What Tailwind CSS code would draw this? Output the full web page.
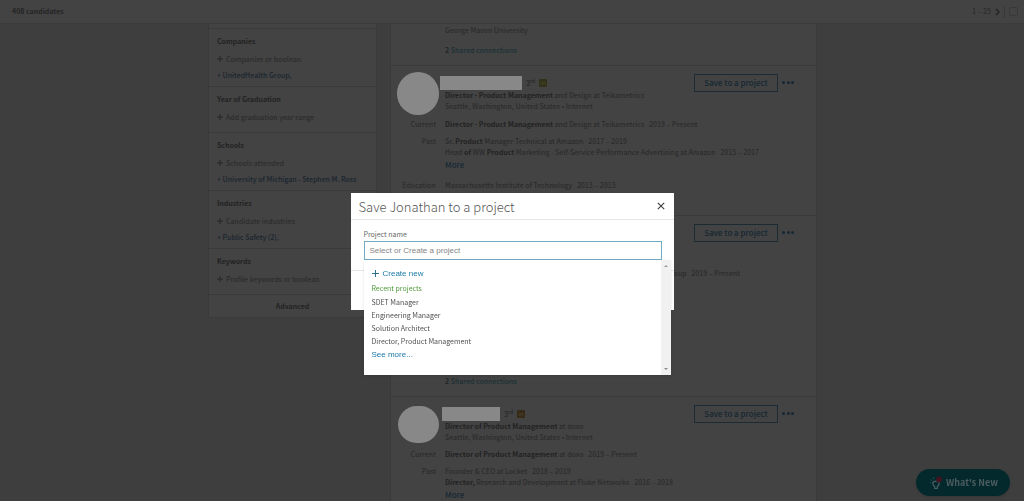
<!DOCTYPE html>
<html lang="en">
<head>
  <meta charset="UTF-8" />
  <meta name="viewport" content="width=device-width, initial-scale=1" />
  <title>Save to a project</title>
  <script src="https://cdn.jsdelivr.net/npm/@tailwindcss/browser@4"></script>
</head>
<body class="h-screen overflow-hidden bg-[#3e3e3e] font-['Noto_Sans_CJK_SC','Liberation_Sans',sans-serif] text-[7px] leading-[11px] font-medium text-[#2c2c2c]">

  <!-- Top bar -->
  <header class="flex h-6 items-center justify-between border-b border-[#3c3c3c] bg-[#434343] pl-3 pr-[6px]">
    <h1 class="font-bold text-[#232323]">408 candidates</h1>
    <div class="flex items-center gap-1">
      <span>1 – 25</span>
      <button aria-label="Next page">
        <svg class="h-2 w-[5px]" viewBox="0 0 5 8" fill="none" stroke="#222" stroke-width="1.4"><path d="M1 1l3 3-3 3" /></svg>
      </button>
      <span class="h-3 w-px bg-[#383838]"></span>
      <input type="checkbox" aria-label="Select all" class="h-[9px] w-[9px] appearance-none rounded-[2px] border border-[#393939]" />
    </div>
  </header>

  <div class="flex items-start">
    <!-- Filters -->
    <aside class="ml-[208px] w-[169px] shrink-0 border-x border-b border-[#3a3a3a] bg-[#434343] leading-4">
      <div class="h-[5px] border-b border-[#3a3a3a]"></div>
      <section class="border-b border-[#3a3a3a] px-2 pt-1 pb-[3px]">
        <h2 class="mb-[2px] font-bold text-[#222]">Companies</h2>
        <button class="flex items-center gap-[3px]">
          <svg class="h-[6px] w-[6px]" viewBox="0 0 6 6" stroke="#262626"><path d="M3 0v6M0 3h6" /></svg>Companies or boolean
        </button>
        <a href="#" class="block text-[#1a2530]">+ UnitedHealth Group,</a>
      </section>
      <section class="border-b border-[#3a3a3a] px-2 pt-1 pb-[7px]">
        <h2 class="mb-[2px] font-bold text-[#222]">Year of Graduation</h2>
        <button class="flex items-center gap-[3px]">
          <svg class="h-[6px] w-[6px]" viewBox="0 0 6 6" stroke="#262626"><path d="M3 0v6M0 3h6" /></svg>Add graduation year range
        </button>
      </section>
      <section class="border-b border-[#3a3a3a] px-2 pt-1 pb-[3px]">
        <h2 class="mb-[2px] font-bold text-[#222]">Schools</h2>
        <button class="flex items-center gap-[3px]">
          <svg class="h-[6px] w-[6px]" viewBox="0 0 6 6" stroke="#262626"><path d="M3 0v6M0 3h6" /></svg>Schools attended
        </button>
        <a href="#" class="block text-[#1a2530]">+ University of Michigan - Stephen M. Ross</a>
      </section>
      <section class="border-b border-[#3a3a3a] px-2 pt-1 pb-[3px]">
        <h2 class="mb-[2px] font-bold text-[#222]">Industries</h2>
        <button class="flex items-center gap-[3px]">
          <svg class="h-[6px] w-[6px]" viewBox="0 0 6 6" stroke="#262626"><path d="M3 0v6M0 3h6" /></svg>Candidate industries
        </button>
        <a href="#" class="block text-[#1a2530]">+ Public Safety (2),</a>
      </section>
      <section class="border-b border-[#3a3a3a] px-2 pt-1 pb-[7px]">
        <h2 class="mb-[2px] font-bold text-[#222]">Keywords</h2>
        <button class="flex items-center gap-[3px]">
          <svg class="h-[6px] w-[6px]" viewBox="0 0 6 6" stroke="#262626"><path d="M3 0v6M0 3h6" /></svg>Profile keywords or boolean
        </button>
      </section>
      <button class="h-[22px] w-full font-bold text-[#222]">Advanced</button>
    </aside>

    <!-- Results -->
    <main class="ml-[13px] w-[427px] shrink-0 border-x border-[#3a3a3a] bg-[#434343]">
      <article class="h-[41px] pl-[54px] pt-px">
        <p>George Mason University</p>
        <a href="#" class="mt-[9px] block text-[#1b3135]"><b class="text-[#1d262b]">2</b> Shared connections</a>
      </article>

      <article class="h-[150px] border-t border-[#3a3a3a]">
        <div class="flex pl-[6px] pr-[22px] pt-[6px]">
          <div class="h-[43px] w-[42px] shrink-0 rounded-full bg-[#888]"></div>
          <div class="ml-[1px] pt-[4px]">
            <div class="flex items-center gap-1">
              <span class="h-[14px] w-[82px] bg-[#888]"></span>
              <span class="text-[#262626]">3<sup class="text-[5px]">rd</sup></span>
              <svg class="h-2 w-2" viewBox="0 0 8 8"><rect width="8" height="8" rx="1" fill="#31311a" /><path d="M2 3.2v3M2 1.5v.9M3.8 6.2v-3M3.8 4.4c0-1.4 2.3-1.4 2.3 0v1.8" fill="none" stroke="#454528" stroke-width=".9" /></svg>
            </div>
            <div class="pl-[5px]">
              <p><b class="text-[#222]">Director - Product Management</b> and Design at Teikametrics</p>
              <p>Seattle, Washington, United States <span class="font-['Liberation_Sans',sans-serif]">•</span> Internet</p>
            </div>
          </div>
          <div class="ml-auto flex items-start gap-1 pt-[2px]">
            <button class="h-[18px] w-[84px] border border-[#1c2b33] text-[8px] leading-[14px] text-[#152833]">Save to a project</button>
            <button aria-label="More actions" class="flex h-4 w-3 items-center justify-between">
              <i class="h-[3px] w-[3px] rounded-full bg-[#152833]"></i><i class="h-[3px] w-[3px] rounded-full bg-[#152833]"></i><i class="h-[3px] w-[3px] rounded-full bg-[#152833]"></i>
            </button>
          </div>
        </div>
        <dl class="mt-1 grid grid-cols-[45px_1fr] gap-x-[9px]">
          <dt class="text-right">Current</dt>
          <dd class="mb-[6px]"><b class="text-[#222]">Director - Product Management</b> and Design at Teikametrics&nbsp;&nbsp; 2019 – Present</dd>
          <dt class="text-right">Past</dt>
          <dd class="mb-2">
            <p>Sr. <b class="text-[#222]">Product</b> Manager Technical at Amazon&nbsp;&nbsp; 2017 – 2019</p>
            <p>Head <b class="text-[#222]">of</b> WW <b class="text-[#222]">Product</b> Marketing - Self-Service Performance Advertising at Amazon&nbsp;&nbsp; 2015 – 2017</p>
            <a href="#" class="block text-[8px] leading-[14px] text-[#152833]">More</a>
          </dd>
          <dt class="text-right">Education</dt>
          <dd>Massachusetts Institute of Technology&nbsp;&nbsp; 2013 – 2015</dd>
        </dl>
      </article>

      <article class="flex h-[181px] flex-col border-t border-[#3a3a3a]">
        <div class="flex items-start justify-end gap-1 pr-[22px] pt-2">
          <button class="h-[18px] w-[84px] border border-[#1c2b33] text-[8px] leading-[14px] text-[#152833]">Save to a project</button>
          <button aria-label="More actions" class="flex h-4 w-3 items-center justify-between">
            <i class="h-[3px] w-[3px] rounded-full bg-[#152833]"></i><i class="h-[3px] w-[3px] rounded-full bg-[#152833]"></i><i class="h-[3px] w-[3px] rounded-full bg-[#152833]"></i>
          </button>
        </div>
        <p class="mt-[26px] pr-[76px] text-right">Group&nbsp;&nbsp; 2019 – Present</p>
        <a href="#" class="mt-auto mb-[9px] ml-[54px] text-[#1b3135]"><b class="text-[#1d262b]">2</b> Shared connections</a>
      </article>

      <article class="border-t border-[#3a3a3a]">
        <div class="flex pl-[7px] pr-[22px] pt-[6px]">
          <div class="mt-[3px] h-[37px] w-[41px] shrink-0 rounded-full bg-[#888]"></div>
          <div class="ml-[3px] pt-[4px]">
            <div class="flex items-center gap-1">
              <span class="h-[14px] w-[58px] bg-[#888]"></span>
              <span class="text-[#262626]">3<sup class="text-[5px]">rd</sup></span>
              <svg class="h-2 w-2" viewBox="0 0 8 8"><rect width="8" height="8" rx="1" fill="#352a15" /><path d="M2 3.2v3M2 1.5v.9M3.8 6.2v-3M3.8 4.4c0-1.4 2.3-1.4 2.3 0v1.8" fill="none" stroke="#4a4030" stroke-width=".9" /></svg>
            </div>
            <div class="pl-[3px]">
              <p><b class="text-[#222]">Director of Product Management</b> at doxo</p>
              <p>Seattle, Washington, United States <span class="font-['Liberation_Sans',sans-serif]">•</span> Internet</p>
            </div>
          </div>
          <div class="ml-auto flex items-start gap-1 pt-[2px]">
            <button class="h-[18px] w-[84px] border border-[#1c2b33] text-[8px] leading-[14px] text-[#152833]">Save to a project</button>
            <button aria-label="More actions" class="flex h-4 w-3 items-center justify-between">
              <i class="h-[3px] w-[3px] rounded-full bg-[#152833]"></i><i class="h-[3px] w-[3px] rounded-full bg-[#152833]"></i><i class="h-[3px] w-[3px] rounded-full bg-[#152833]"></i>
            </button>
          </div>
        </div>
        <dl class="mt-[6px] grid grid-cols-[45px_1fr] gap-x-[9px]">
          <dt class="text-right">Current</dt>
          <dd class="mb-[6px]"><b class="text-[#222]">Director of Product Management</b> at doxo&nbsp;&nbsp; 2019 – Present</dd>
          <dt class="text-right">Past</dt>
          <dd>
            <p>Founder &amp; CEO at Locket&nbsp;&nbsp; 2018 – 2019</p>
            <p><b class="text-[#222]">Director,</b> Research and Development at Fluke Networks&nbsp;&nbsp; 2016 – 2018</p>
            <a href="#" class="block text-[8px] leading-[14px] text-[#152833]">More</a>
          </dd>
        </dl>
      </article>
    </main>
  </div>

  <button class="fixed right-[14px] bottom-[5px] flex h-[27px] w-[94px] items-center justify-center gap-[2px] rounded-full bg-[#03292d] text-[9px] font-bold text-[#4d5d60] shadow">
    <svg class="h-4 w-4" viewBox="0 0 16 16" fill="none">
      <path d="M6.800 13.500v-1.500C5.500 10.600 4.700 9.700 4.800 8.300c.2-1.500 1.600-2.200 3.200-2.200s3 .7 3.200 2.200c.1 1.400-.7 2.300-2 3.700v1.500z" stroke="#4d6063" stroke-width="1.200" />
      <path d="M2 7.500l1 .3M2.600 4.500l1.200 1M5 2.500l.6 1.400" stroke="#1c5a5c" />
      <circle cx="11" cy="4.500" r="3" fill="#43141f" />
    </svg>
    What's New
  </button>

  <!-- Save dialog -->
  <div class="fixed inset-0 flex items-start justify-center pt-[193px] font-normal">
    <div role="dialog" aria-labelledby="dialog-title" class="w-[323px] bg-white text-[#666]">
      <div class="flex h-[27px] items-center justify-between border-b border-[#e6e6e6] pl-2 pr-[9px]">
        <h2 id="dialog-title" class="text-[13px] font-extralight text-[#555]">Save Jonathan to a project</h2>
        <button aria-label="Close">
          <svg class="h-[8px] w-[8px]" viewBox="0 0 8 8" stroke="#444" stroke-width="1.200"><path d="M.8.8l6.400 6.400M7.200.8L.8 7.200" /></svg>
        </button>
      </div>
      <div class="relative h-[51px] border-b border-[#e6e6e6] pr-3 pl-[13px] pt-2">
        <label for="project" class="block h-[13px] leading-[13px]">Project name</label>
        <input id="project" type="text" placeholder="Select or Create a project" class="block h-[19px] w-full border border-[#6fabc4] bg-white px-[5px] font-['Liberation_Sans',sans-serif] text-[8px] outline-none placeholder:text-[#868686]" />
        <div class="absolute top-10 left-[13px] flex h-[115px] w-[307px] bg-white shadow">
          <div class="flex-1 pt-[6px] pl-2">
            <button class="mb-px flex h-[14px] items-center gap-1 font-['Liberation_Sans',sans-serif] text-[8px] text-[#1b79a8]">
              <svg class="h-[7px] w-[7px]" viewBox="0 0 7 7" stroke="#2b6f93"><path d="M3.500 0v7M0 3.500h7" /></svg>Create new
            </button>
            <h3 class="mb-px h-[14px] leading-[14px] text-[#4f9a3a]">Recent projects</h3>
            <ul class="leading-[13px] text-[#505050]">
              <li><button>SDET Manager</button></li>
              <li><button>Engineering Manager</button></li>
              <li><button>Solution Architect</button></li>
              <li><button>Director, Product Management</button></li>
            </ul>
            <a href="#" class="block font-['Liberation_Sans',sans-serif] text-[8px] leading-[14px] text-[#1b79a8]">See more...</a>
          </div>
          <div class="flex w-[10px] flex-col items-center justify-between bg-[#f1f1f1] py-[5px]">
            <svg class="h-[2px] w-1" viewBox="0 0 4 2"><path d="M0 2l2-2 2 2z" fill="#999" /></svg>
            <svg class="h-[2px] w-1" viewBox="0 0 4 2"><path d="M0 0l2 2 2-2z" fill="#888" /></svg>
          </div>
        </div>
      </div>
      <div class="h-[39px]"></div>
    </div>
  </div>
</body>
</html>
